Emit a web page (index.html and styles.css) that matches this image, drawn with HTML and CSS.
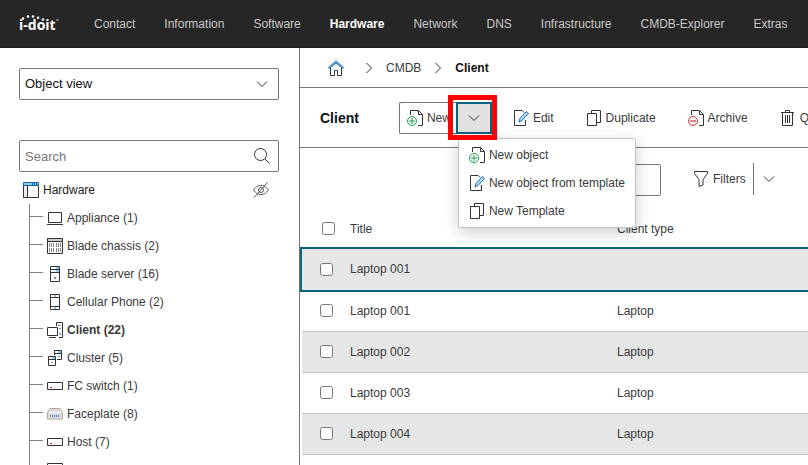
FILE: index.html
```html
<!DOCTYPE html>
<html lang="en">
<head>
  <meta charset="UTF-8" />
  <title>i-doit - Client</title>
  <meta name="viewport" content="width=device-width, initial-scale=1.0" />
  <link rel="stylesheet" href="styles.css">
</head>
<body>

  <!-- Icon sprite -->
  <svg class="sprite" aria-hidden="true">
    <symbol id="icon-down" viewBox="0 0 16 16"><path d="m3 5.500 5 5 5-5" /></symbol>
    <symbol id="icon-right" viewBox="0 0 16 16"><path d="m5.500 3 5 5-5 5" /></symbol>
    <symbol id="icon-new" viewBox="0 0 16 16">
      <path d="M3.500 5V.5h8l4 4v11H11M11.500.5v4h4" />
      <circle class="green" cx="5" cy="11" r="4.500" />
      <path class="green" d="M5 8v6M2 11h6" />
    </symbol>
    <symbol id="icon-edit" viewBox="0 0 16 16">
      <path d="M9 .5H1.500v15h11V10M9 .5l2 2" />
      <path class="blue" d="m6 12 1-3.500 6.500-7 2 2L9 10.500Z" fill="#b5dcf2" />
    </symbol>
    <symbol id="icon-copy" viewBox="0 0 16 16"><path d="M1.500 3.500h9v12h-9zM5.500 3V.5h9v12H11" /></symbol>
    <symbol id="icon-switch" viewBox="0 0 16 16"><path d="M.5 4.500h15v7H.5z" /><path class="red" d="M3 9.500h2" /></symbol>
  </svg>

  <header class="topbar">
    <a class="logo" href="#">
      <svg class="logo-dots" viewBox="0 0 40 8" aria-hidden="true">
        <circle cx="4" cy="3.500" r="1.300" /><circle cx="9" cy="1.500" r="1.300" />
        <circle cx="14" cy="1.500" r="1.300" /><circle cx="19" cy="2.800" r="1.300" /><circle cx="24" cy="4.500" r="1.300" />
        <circle class="dim" cx="38.500" cy="5" r="1.200" />
      </svg>
      <span>i-doit</span>
    </a>
    <nav class="nav">
      <a href="#">Contact</a>
      <a href="#">Information</a>
      <a href="#">Software</a>
      <a href="#" class="active">Hardware</a>
      <a href="#">Network</a>
      <a href="#">DNS</a>
      <a href="#">Infrastructure</a>
      <a href="#">CMDB-Explorer</a>
      <a href="#">Extras</a>
    </nav>
  </header>

  <div class="layout">
    <aside class="sidebar">
      <div class="field">
        <select aria-label="View"><option>Object view</option></select>
        <svg class="icon"><use href="#icon-down" /></svg>
      </div>
      <div class="field search">
        <input type="text" placeholder="Search" aria-label="Search">
        <svg class="icon" viewBox="0 0 16 16"><circle cx="6.500" cy="6.500" r="6" /><path d="m11 11 4.500 4.500" /></svg>
      </div>

      <div class="tree-head">
        <svg class="icon" viewBox="0 0 16 16">
          <path fill="#eee" d="M.5 3.500h4v12h-4z" /><path d="M.5 3v12.500h15V3M4.500 4v11" />
          <path class="blue" fill="#8ccaf0" d="M.5.500h15v3H.5z" /><path class="blue" d="M9.500 1v2M11.500 1v2M13.500 1v2" />
        </svg>
        <span>Hardware</span>
        <button class="plain" aria-label="Toggle empty object types">
          <svg class="icon muted" viewBox="0 0 16 16">
            <path d="M.5 8C3 4.500 5.500 3.500 8 3.500S13 4.500 15.500 8C13 11.500 10.500 12.500 8 12.500S3 11.500.5 8Z" />
            <circle cx="8" cy="8" r="2.500" /><path d="M1 15.500 14.500.5" />
          </svg>
        </button>
      </div>

      <ul class="tree">
        <li><a href="#"><svg class="icon" viewBox="0 0 16 16"><path d="M1.500 2.500h13v10h-13zM0 14.500h16" /></svg>Appliance (1)</a></li>
        <li><a href="#"><svg class="icon" viewBox="0 0 16 16"><path d="M.5.500h15v15H.5z" /><path fill="#ccc" d="M.5.500h15v3H.5z" /><path class="thin" stroke-dasharray="4 1" d="M2.500 5v9M4.500 5v9M6.500 5v9M9.500 5v9M11.500 5v9M13.500 5v9" /></svg>Blade chassis (2)</a></li>
        <li><a href="#"><svg class="icon" viewBox="0 0 16 16"><path fill="#8ccaf0" stroke="none" d="M9 1h3v5H9z" /><path d="M3.500.5h9v15h-9zM3.500 3.500h9M3.500 6.500h9" /><path class="thin" stroke-width="2" d="M7 12h2" /></svg>Blade server (16)</a></li>
        <li><a href="#"><svg class="icon" viewBox="0 0 16 16"><path fill="#8ccaf0" stroke="none" d="M7 1h2v2H7zM7 13h2v2H7z" /><path d="M3.500.5h9v15h-9zM3.500 3.500h9M3.500 12.500h9" /></svg>Cellular Phone (2)</a></li>
        <li class="active"><a href="#"><svg class="icon" viewBox="0 0 16 16"><path d="M9.500 4V.5h6v15H12M.5 5.500h10v8H.5zM2 15.500h7" /><path class="thin" d="M11 3.500h3M12 6.500h2" /><path class="blue" d="M13 11v2" /></svg>Client (22)</a></li>
        <li><a href="#"><svg class="icon" viewBox="0 0 16 16"><path fill="#8ccaf0" stroke="none" d="M11 1h3v2h-3zM5 7h3v2H5z" /><path d="M7.500 5V.5h7v9H10M7 3.500h7M1.500 6.500h7v9h-7zM1.500 9.500h7" /><path class="thin" d="M4 12.500h2M11 6.500h2" /></svg>Cluster (5)</a></li>
        <li><a href="#"><svg class="icon"><use href="#icon-switch" /></svg>FC switch (1)</a></li>
        <li><a href="#"><svg class="icon" viewBox="0 0 16 16"><path stroke="#aaa" fill="#ddd" d="M3 2.500h10l2.500 4v6.500H.5V6.500Z" /><path stroke="#fff" d="M2 6.500h12" /><path stroke="#4c7cc4" stroke-width="2" stroke-dasharray="1 1" d="M3 10h10" /></svg>Faceplate (8)</a></li>
        <li><a href="#"><svg class="icon"><use href="#icon-switch" /></svg>Host (7)</a></li>
        <li><a href="#" aria-label="More"><svg class="icon" viewBox="0 0 16 16"><path d="M.5 1.500h15v9H.5z" /></svg></a></li>
      </ul>
    </aside>

    <main class="main">
      <nav class="breadcrumb" aria-label="Breadcrumb">
        <a class="home" href="#" aria-label="Home"><svg class="icon" viewBox="0 0 16 16"><path d="M2.500 8v7.500h4v-5h3v5h4V8" /><path class="blue" fill="#8ccaf0" d="M.5 7.500 8 1l7.500 6.500-1 1L8 3 1.500 8.500Z" /></svg></a>
        <svg class="icon"><use href="#icon-right" /></svg>
        <a href="#">CMDB</a>
        <svg class="icon"><use href="#icon-right" /></svg>
        <strong>Client</strong>
      </nav>

      <div class="toolbar">
        <h1>Client</h1>
        <div class="split">
          <button class="split-main"><svg class="icon"><use href="#icon-new" /></svg>New</button>
          <button class="split-toggle" aria-label="More ways to create" aria-expanded="true"><svg class="icon"><use href="#icon-down" /></svg></button>
          <div class="highlight"></div>
          <div class="menu">
            <button><svg class="icon"><use href="#icon-new" /></svg>New object</button>
            <button><svg class="icon"><use href="#icon-edit" /></svg>New object from template</button>
            <button><svg class="icon"><use href="#icon-copy" /></svg>New Template</button>
          </div>
        </div>
        <div class="actions">
          <button><svg class="icon"><use href="#icon-edit" /></svg>Edit</button>
          <button><svg class="icon"><use href="#icon-copy" /></svg>Duplicate</button>
          <button><svg class="icon" viewBox="0 0 16 16"><path d="M3.500 5V.5h8l4 4v11H11M11.500.5v4h4" /><circle class="red" cx="5" cy="11" r="4.500" /><path class="red pale" d="M2 11h6" /></svg>Archive</button>
          <button><svg class="icon" viewBox="0 0 16 16"><path d="M1 2.500h13M5.500 2V.5h4V2M2.500 3v12.500h10V3M5.500 5v8M7.500 5v8M9.500 5v8" /></svg>Quick purge</button>
        </div>
      </div>

      <div class="filterbar">
        <input type="text" aria-label="Filter value">
        <button class="filters"><svg class="icon" viewBox="0 0 16 16"><path d="M1.500.500h13v2L10 8.500V14l-4 1.500v-7L1.500 2.500Z" /></svg>Filters</button>
        <button class="filters-toggle" aria-label="Saved filters"><svg class="icon"><use href="#icon-down" /></svg></button>
      </div>

      <table class="list">
        <thead>
          <tr><th><input type="checkbox" aria-label="Select all"></th><th>Title</th><th>Client type</th></tr>
        </thead>
        <tbody>
          <tr class="selected"><td><input type="checkbox" aria-label="Select new Laptop 001"></td><td>Laptop 001</td><td></td></tr>
          <tr><td><input type="checkbox" aria-label="Select Laptop 001"></td><td>Laptop 001</td><td>Laptop</td></tr>
          <tr><td><input type="checkbox" aria-label="Select Laptop 002"></td><td>Laptop 002</td><td>Laptop</td></tr>
          <tr><td><input type="checkbox" aria-label="Select Laptop 003"></td><td>Laptop 003</td><td>Laptop</td></tr>
          <tr><td><input type="checkbox" aria-label="Select Laptop 004"></td><td>Laptop 004</td><td>Laptop</td></tr>
        </tbody>
      </table>
    </main>
  </div>

</body>
</html>
```

FILE: styles.css
```css
:root {
  --text: #3a3a3a;
  --line: #767676;
  --row-line: #c4c6c6;
  --row-alt: #e5e7e6;
  --teal: #0b647d;
}

* {
  box-sizing: border-box;
}

body {
  margin: 0;
  height: 100vh;
  display: flex;
  flex-direction: column;
  overflow: hidden;
  background: #fff;
  color: var(--text);
  font: 12px/16px "Liberation Sans", Arial, sans-serif;
}

a {
  color: inherit;
  text-decoration: none;
}

button {
  display: flex;
  align-items: center;
  gap: 4px;
  padding: 0;
  border: none;
  background: none;
  color: inherit;
  font: inherit;
  white-space: nowrap;
  cursor: pointer;
}

.sprite {
  display: none;
}

.icon {
  flex: none;
  width: 16px;
  height: 16px;
  fill: none;
  stroke: #333;
}

.icon.muted {
  stroke: #555;
}

.blue {
  stroke: #1769b5;
}

.green {
  stroke: #17a34a;
}

.red {
  stroke: #d8322f;
}

.pale {
  stroke: #e98582;
  stroke-width: 2;
}

.thin {
  stroke: #888;
}

/* Top bar */
.topbar {
  flex: none;
  display: flex;
  align-items: center;
  gap: 34px;
  height: 48px;
  padding-left: 19px;
  background: #262626;
  border-bottom: 1px solid #1a1a1a;
  color: #c8c8c8;
}

.logo {
  flex: none;
  width: 41px;
  color: #fff;
  font: bold 14px/14px "Open Sans", sans-serif;
}

.logo span {
  display: block;
  margin-top: -5px;
}

.logo-dots {
  display: block;
  width: 40px;
  height: 8px;
  fill: #fff;
}

.logo-dots .dim {
  fill: #888;
}

.nav {
  display: flex;
  gap: 29px;
  white-space: nowrap;
}

.nav .active {
  color: #fff;
  font-weight: bold;
}

.layout {
  flex: 1;
  display: flex;
  min-height: 0;
}

/* Sidebar */
.sidebar {
  flex: none;
  width: 300px;
  padding: 20px 20px 0 19px;
  border-right: 1px solid var(--line);
  overflow: hidden;
}

.field {
  display: flex;
  align-items: center;
  height: 32px;
  padding-right: 8px;
  border: 1px solid var(--line);
  border-radius: 2px;
}

.field select,
.field input {
  flex: 1;
  min-width: 0;
  height: 30px;
  padding: 0 5px;
  border: none;
  outline: none;
  appearance: none;
  background: none;
  color: #111;
  font: inherit;
  font-size: 13px;
}

.field input::placeholder {
  color: #767676;
}

.search {
  margin-top: 40px;
}

.tree-head {
  display: flex;
  align-items: center;
  gap: 4px;
  height: 28px;
  margin-top: 4px;
  padding: 0 10px 0 4px;
  color: #222;
}

.tree-head .plain {
  margin-left: auto;
}

.tree {
  margin: 0 0 0 10px;
  padding: 0;
  list-style: none;
  border-left: 1px solid #808080;
}

.tree li {
  display: flex;
  gap: 4px;
  height: 28px;
}

.tree li::before {
  content: "";
  width: 13px;
  height: 12px;
  border-bottom: 1px solid #808080;
}

.tree a {
  display: flex;
  align-items: center;
  gap: 4px;
}

.tree .active {
  font-weight: bold;
}

/* Main */
.main {
  flex: 1;
  min-width: 0;
  overflow: hidden;
}

.breadcrumb {
  display: flex;
  align-items: center;
  gap: 9px;
  height: 40px;
  padding-left: 28px;
  border-bottom: 1px solid var(--line);
}

.breadcrumb .home {
  display: flex;
  margin-right: 8px;
}

.breadcrumb strong {
  color: #111;
}

.toolbar {
  display: flex;
  align-items: center;
  height: 60px;
  padding-left: 20px;
  border-bottom: 1px solid var(--line);
}

.toolbar h1 {
  margin: 0 40px 0 0;
  color: #111;
  font-size: 14px;
}

.split {
  position: relative;
  display: flex;
  flex: none;
  height: 32px;
}

.split-main {
  width: 57px;
  padding-left: 7px;
  border: 1px solid var(--line);
  border-right: none;
  border-radius: 2px 0 0 2px;
  overflow: hidden;
}

.split-toggle {
  width: 36px;
  justify-content: center;
  background: #e2e2e2;
  border: 2px solid var(--teal);
}

.highlight {
  position: absolute;
  top: -7px;
  right: -5px;
  width: 49px;
  height: 45px;
  border: 5px solid #f00;
  z-index: 2;
}

.menu {
  position: absolute;
  top: 36px;
  left: 59px;
  z-index: 1;
  padding: 2px 10px;
  background: #fff;
  border: 1px solid #c4c4c4;
  border-radius: 2px;
  box-shadow: 0 4px 16px rgba(0, 0, 0, 0.2);
}

.menu button {
  height: 28px;
}

.actions {
  display: flex;
  gap: 32px;
  margin-left: 21px;
}

.filterbar {
  display: flex;
  align-items: center;
  height: 60px;
  padding: 2px 0 0 180px;
}

.filterbar input {
  width: 181px;
  height: 32px;
  margin-top: 2px;
  border: 1px solid var(--line);
  border-radius: 2px;
}

.filters {
  height: 32px;
  margin-left: 32px;
  padding-right: 7px;
  border-right: 1px solid var(--line);
}

.filters-toggle {
  margin-left: 7px;
}

/* Object list, runs past the right edge of the window */
.list {
  width: calc(100% + 80px);
  margin-left: 2px;
  border-collapse: collapse;
  table-layout: fixed;
}

.list th,
.list td {
  height: 41px;
  padding: 0;
  text-align: left;
  font-weight: normal;
}

.list td {
  border-bottom: 1px solid var(--row-line);
}

.list th:nth-child(1) {
  width: 48px;
  padding-left: 2px;
}

.list th:nth-child(2) {
  width: 267px;
}

.list input {
  display: block;
  width: 13px;
  height: 13px;
  margin: 0 0 0 18px;
}

.list tbody tr:nth-child(odd) {
  background: var(--row-alt);
}

.list .selected {
  outline: 2px solid var(--teal);
}
```
